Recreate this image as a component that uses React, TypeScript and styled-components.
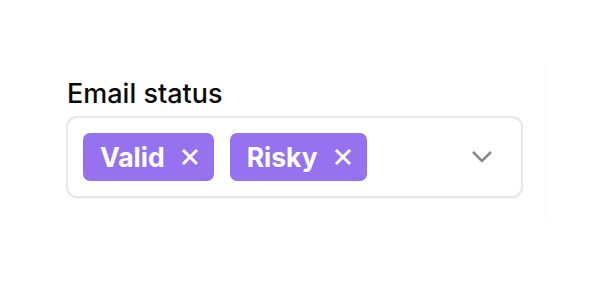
import React from "react";
import styled, { createGlobalStyle } from "styled-components";

const Global = createGlobalStyle`
  html, body { margin: 0; padding: 0; background: #ffffff; }
  body { font-family: Inter, "Noto Sans", sans-serif; -webkit-font-smoothing: antialiased; }
`;

const Panel = styled.div`
  margin-top: 63px;
  width: 546px;
  height: 157px;
  border-right: 1px solid #f7f7f8;
  box-sizing: border-box;
  padding: 15px 0 0 66px;
`;

const Field = styled.div`
  width: 457px;
  display: flex;
  flex-direction: column;
  gap: 6px;
`;

const Label = styled.label`
  font-size: 27px;
  font-weight: 500;
  line-height: 32px;
  color: #0b0b0c;
  padding-left: 1px;
`;

const Control = styled.div`
  box-sizing: border-box;
  height: 82px;
  border: 2px solid #e6e8ec;
  border-radius: 11px;
  padding: 0 28px 0 15px;
  display: flex;
  align-items: center;
  gap: 16px;
  background: #fff;
  box-shadow: 0 1px 2px rgba(0, 0, 0, 0.04);
`;

const Tags = styled.div`
  display: flex;
  gap: 16px;
  flex: 1;
`;

const Tag = styled.span`
  display: inline-flex;
  align-items: center;
  height: 48px;
  box-sizing: border-box;
  padding: 0 15px 0 17px;
  gap: 16px;
  background: #9672f0;
  color: #fff;
  border-radius: 7px;
  font-size: 26.5px;
  font-weight: 700;
`;

const Remove = styled.span`
  display: inline-flex;
  width: 18px;
  height: 18px;
  align-items: center;
  justify-content: center;
`;

const Chevron = styled.span`
  display: inline-flex;
  color: #8a8a8a;
`;

const X = () => (
  <svg width="18" height="18" viewBox="0 0 18 18" fill="none">
    <path d="M3 3 L15 15 M15 3 L3 15" stroke="#fff" strokeWidth="3" strokeLinecap="square" />
  </svg>
);

export default function App() {
  return (
    <>
      <Global />
      <Panel>
        <Field>
          <Label>Email status</Label>
          <Control>
            <Tags>
              {["Valid", "Risky"].map((t) => (
                <Tag key={t}>
                  {t}
                  <Remove>
                    <X />
                  </Remove>
                </Tag>
              ))}
            </Tags>
            <Chevron>
              <svg width="22" height="14" viewBox="0 0 22 14" fill="none">
                <path d="M2 2 L11 11 L20 2" stroke="currentColor" strokeWidth="2.6" />
              </svg>
            </Chevron>
          </Control>
        </Field>
      </Panel>
    </>
  );
}
